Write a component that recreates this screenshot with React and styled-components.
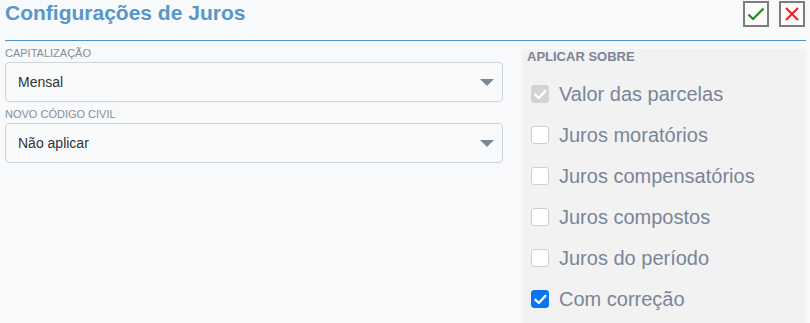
import React from "react";
import styled, { createGlobalStyle } from "styled-components";

const Global = createGlobalStyle`
  html, body { margin: 0; padding: 0; background: #f8f9fb; }
  body { font-family: "Liberation Sans", Arial, sans-serif; width: 810px; height: 323px; overflow: hidden; }
  * { box-sizing: border-box; }
`;

const Page = styled.div`
  padding: 0 4px 0 5px;
  display: flex;
  flex-direction: column;
`;

const Header = styled.div`
  height: 41px;
  display: flex;
  align-items: flex-start;
  justify-content: space-between;
  border-bottom: 1.5px solid #4f93c9;
`;

const Title = styled.h1`
  margin: 1px 0 0 0;
  font-size: 21px;
  line-height: 24px;
  font-weight: bold;
  color: #5796c8;
`;

const Actions = styled.div`
  display: flex;
  gap: 10px;
  margin-top: 1px;
  margin-right: 1px;
`;

const IconButton = styled.button`
  width: 26px;
  height: 26px;
  padding: 0;
  border: 2px solid #7d7d7d;
  background: #fbfbfc;
  display: flex;
  align-items: center;
  justify-content: center;
`;

const Body = styled.div`
  display: flex;
  gap: 19px;
`;

const LeftCol = styled.div`
  width: 498px;
  display: flex;
  flex-direction: column;
`;

const Field = styled.div`
  margin-top: 4px;
  display: flex;
  flex-direction: column;
`;

const Label = styled.label`
  font-size: 11px;
  line-height: 17px;
  color: #878d97;
  text-transform: uppercase;
`;

const Select = styled.div`
  height: 40px;
  border: 1px solid #cfd2d6;
  border-radius: 4px;
  background: #f9fafc;
  display: flex;
  align-items: center;
  justify-content: space-between;
  padding: 0 8px 0 12px;
  font-size: 14px;
  color: #333;
`;

const Arrow = styled.span`
  width: 0;
  height: 0;
  border-left: 7px solid transparent;
  border-right: 7px solid transparent;
  border-top: 7px solid #7b8799;
  margin-top: 1px;
`;

const Panel = styled.div`
  margin-top: 8px;
  width: 284px;
  height: 274px;
  background: #f2f2f2;
  padding: 0 0 0 5px;
  display: flex;
  flex-direction: column;
`;

const PanelTitle = styled.div`
  font-size: 13px;
  line-height: 16px;
  font-weight: bold;
  color: #7b8598;
  margin-bottom: 8.5px;
`;

const Row = styled.label`
  height: 41px;
  display: flex;
  align-items: center;
  gap: 10px;
  padding-left: 4px;
  font-size: 20px;
  color: #7a8598;
`;

const Box = styled.span`
  width: 18px;
  height: 18px;
  border-radius: 3px;
  border: 1px solid ${p => (p.$state === "on" ? "#0b74f0" : p.$state === "dis" ? "#d4d4d4" : "#cfcfcf")};
  background: ${p => (p.$state === "on" ? "#0b74f0" : p.$state === "dis" ? "#d4d4d4" : "#fff")};
  display: flex;
  align-items: center;
  justify-content: center;
  flex: none;
`;

const Check = () => (
  <svg width="13" height="11" viewBox="0 0 13 11">
    <path d="M1.5 5.8 L4.8 9 L11.5 1.8" fill="none" stroke="#fff" strokeWidth="2.4" strokeLinecap="round" strokeLinejoin="round" />
  </svg>
);

const items = [
  ["Valor das parcelas", "dis"],
  ["Juros moratórios", "off"],
  ["Juros compensatórios", "off"],
  ["Juros compostos", "off"],
  ["Juros do período", "off"],
  ["Com correção", "on"],
];

export default function App() {
  return (
    <>
      <Global />
      <Page>
        <Header>
          <Title>Configurações de Juros</Title>
          <Actions>
            <IconButton aria-label="confirmar">
              <svg width="18" height="14" viewBox="0 0 18 14">
                <path d="M1.5 7.5 L6 12 L16.5 1.5" fill="none" stroke="#1f8a1f" strokeWidth="2.2" />
              </svg>
            </IconButton>
            <IconButton aria-label="cancelar">
              <svg width="14" height="14" viewBox="0 0 14 14">
                <path d="M1 1 L13 13 M13 1 L1 13" fill="none" stroke="#ee1c1c" strokeWidth="2" />
              </svg>
            </IconButton>
          </Actions>
        </Header>
        <Body>
          <LeftCol>
            <Field>
              <Label>Capitalização</Label>
              <Select>
                Mensal
                <Arrow />
              </Select>
            </Field>
            <Field>
              <Label>Novo código civil</Label>
              <Select>
                Não aplicar
                <Arrow />
              </Select>
            </Field>
          </LeftCol>
          <Panel>
            <PanelTitle>APLICAR SOBRE</PanelTitle>
            {items.map(([t, s]) => (
              <Row key={t}>
                <Box $state={s}>{s !== "off" && <Check />}</Box>
                {t}
              </Row>
            ))}
          </Panel>
        </Body>
      </Page>
    </>
  );
}
